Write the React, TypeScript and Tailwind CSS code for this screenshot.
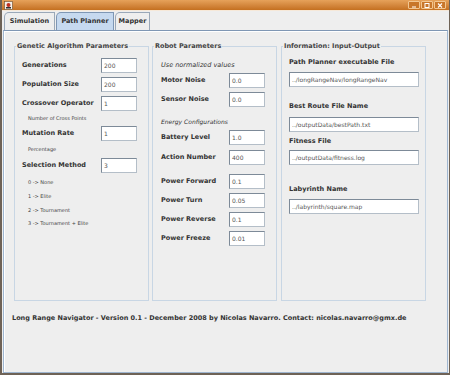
import type { ReactNode } from 'react';

const font = { fontFamily: '"DejaVu Sans", Verdana, sans-serif' };

function Input({ value, w = 'w-[36px]' }: { value: string; w?: string }) {
  return (
    <div
      className={`${w} h-[15px] bg-white border border-t-[#7d8a98] border-l-[#7d8a98] border-r-[#b4bec8] border-b-[#b4bec8] flex items-center pl-[2px] text-[6px] text-[#555] leading-none overflow-hidden whitespace-nowrap`}
    >
      {value}
    </div>
  );
}

function Row({ label, value, lw, mt }: { label: string; value: string; lw: string; mt: string }) {
  return (
    <div className={`flex items-center ${mt}`}>
      <span className={`${lw} text-[6.5px] font-bold text-[#333] leading-none`}>{label}</span>
      <Input value={value} />
    </div>
  );
}

function Note({ children, mt }: { children: ReactNode; mt: string }) {
  return <div className={`${mt} h-[7px] leading-[7px] text-[5px] text-[#444]`}>{children}</div>;
}

function Group({ title, w, children }: { title: string; w: string; children: ReactNode }) {
  return (
    <fieldset className={`${w} h-[259px] border border-[#c8d6e4]`}>
      <legend className="ml-[1px] px-[1px] text-[6.5px] font-bold leading-[8px] text-[#444]">{title}</legend>
      {children}
    </fieldset>
  );
}

function TitleBar() {
  return (
    <div className="h-[10px] flex items-center justify-between bg-gradient-to-b from-[#e6a25a] to-[#c4701f]">
      <svg width="9" height="9" viewBox="0 0 9 9" className="ml-[2px]">
        <rect x="0.5" y="0.5" width="8" height="8" fill="#f4f0ea" stroke="#6b4a2a" strokeWidth="0.6" />
        <circle cx="4.5" cy="4" r="2" fill="#c03020" />
        <rect x="2" y="6" width="5" height="1.5" fill="#333" />
      </svg>
      <div className="flex gap-[1px] mr-[3px]">
        {['min', 'max', 'close'].map((k) => (
          <div
            key={k}
            className="w-[12px] h-[8px] rounded-[1px] border border-[#f2c690] bg-[#c8762a] flex items-center justify-center"
          >
            <svg width="6" height="5" viewBox="0 0 6 5">
              {k === 'min' && <rect x="1" y="3.5" width="4" height="1" fill="#fff" />}
              {k === 'max' && <rect x="1" y="0.5" width="4" height="4" fill="none" stroke="#fff" strokeWidth="1" />}
              {k === 'close' && <path d="M1 0.5 L5 4.5 M5 0.5 L1 4.5" stroke="#fff" strokeWidth="1.1" />}
            </svg>
          </div>
        ))}
      </div>
    </div>
  );
}

export default function App() {
  return (
    <div style={font} className="w-[450px] h-[375px] bg-[#eeeeee] flex flex-col border-l-[2px] border-r border-b-[2px] border-[#6e6256] overflow-hidden">
      <TitleBar />
      <div className="h-[1px] bg-[#f6e8d8]" />

      {/* tabs */}
      <div className="flex h-[19px] pt-[1px] pl-[2px] gap-[1px] items-end">
        <div className="w-[51px] h-[18px] flex items-center justify-center border border-b-0 border-[#9aa8b8] rounded-tl-[5px] bg-[#eeeeee] text-[6.5px] font-bold text-[#333]">
          Simulation
        </div>
        <div className="w-[58px] h-[18px] flex items-center justify-center border border-b-0 border-[#7f97b4] rounded-tl-[5px] bg-[#c6d9ef] text-[6.5px] font-bold text-[#333]">
          Path Planner
        </div>
        <div className="w-[35px] h-[18px] flex items-center justify-center border border-b-0 border-[#9aa8b8] rounded-tl-[5px] bg-[#eeeeee] text-[6.5px] font-bold text-[#333]">
          Mapper
        </div>
      </div>

      {/* tab content */}
      <div className="flex-1 ml-[1px] mr-[1px] border border-[#9fb6d0] border-t-[#7f97b4] shadow-[inset_1px_1px_0_#ffffff]">
        <div className="flex pl-[10px] pt-[11px]">
          <Group title="Genetic Algorithm Parameters" w="w-[135px]">
            <div className="pl-[7px] flex flex-col">
              <Row label="Generations" value="200" lw="w-[79px]" mt="mt-[8px]" />
              <Row label="Population Size" value="200" lw="w-[79px]" mt="mt-[4px]" />
              <Row label="Crossover Operator" value="1" lw="w-[79px]" mt="mt-[4px]" />
              <Note mt="mt-[4px] pl-[6px]">Number of Cross Points</Note>
              <Row label="Mutation Rate" value="1" lw="w-[79px]" mt="mt-[4px]" />
              <Note mt="mt-[5px] pl-[6px]">Percentage</Note>
              <Row label="Selection Method" value="3" lw="w-[79px]" mt="mt-[5px]" />
              <Note mt="mt-[6px] pl-[6px]">0 -&gt; None</Note>
              <Note mt="mt-[7px] pl-[6px]">1 -&gt; Elite</Note>
              <Note mt="mt-[7px] pl-[6px]">2 -&gt; Tournament</Note>
              <Note mt="mt-[6px] pl-[6px]">3 -&gt; Tournament + Elite</Note>
            </div>
          </Group>

          <div className="w-[3px]" />
          <Group title="Robot Parameters" w="w-[125px]">
            <div className="pl-[8px] flex flex-col">
              <div className="mt-[11px] h-[8px] leading-[8px] text-[6.5px] italic text-[#333]">Use normalized values</div>
              <Row label="Motor Noise" value="0.0" lw="w-[68px]" mt="mt-[4px]" />
              <Row label="Sensor Noise" value="0.0" lw="w-[68px]" mt="mt-[4px]" />
              <div className="mt-[11px] h-[8px] leading-[8px] text-[6px] italic text-[#333]">Energy Configurations</div>
              <Row label="Battery Level" value="1.0" lw="w-[68px]" mt="mt-[4px]" />
              <Row label="Action Number" value="400" lw="w-[68px]" mt="mt-[5px]" />
              <Row label="Power Forward" value="0.1" lw="w-[68px]" mt="mt-[9px]" />
              <Row label="Power Turn" value="0.05" lw="w-[68px]" mt="mt-[4px]" />
              <Row label="Power Reverse" value="0.1" lw="w-[68px]" mt="mt-[4px]" />
              <Row label="Power Freeze" value="0.01" lw="w-[68px]" mt="mt-[4px]" />
            </div>
          </Group>

          <div className="w-[4px]" />
          <Group title="Information: Input-Output" w="w-[145px]">
            <div className="pl-[7px] flex flex-col">
              <div className="mt-[8px] h-[8px] leading-[8px] text-[6.5px] font-bold text-[#333]">Path Planner executable File</div>
              <div className="mt-[6px]"><Input value="../longRangeNav/longRangeNav" w="w-[130px]" /></div>
              <div className="mt-[15px] h-[8px] leading-[8px] text-[6.5px] font-bold text-[#333]">Best Route File Name</div>
              <div className="mt-[7px]"><Input value="../outputData/bestPath.txt" w="w-[130px]" /></div>
              <div className="mt-[5px] h-[8px] leading-[8px] text-[6.5px] font-bold text-[#333]">Fitness File</div>
              <div className="mt-[5px]"><Input value="../outputData/fitness.log" w="w-[130px]" /></div>
              <div className="mt-[20px] h-[8px] leading-[8px] text-[6.5px] font-bold text-[#333]">Labyrinth Name</div>
              <div className="mt-[6px]"><Input value="../labyrinth/square.map" w="w-[130px]" /></div>
            </div>
          </Group>
        </div>

        <div className="mt-[13px] pl-[8px] h-[8px] leading-[8px] text-[6.5px] font-bold text-[#333] whitespace-nowrap">
          Long Range Navigator - Version 0.1 - December 2008 by Nicolas Navarro. Contact: nicolas.navarro@gmx.de
        </div>
      </div>
    </div>
  );
}
